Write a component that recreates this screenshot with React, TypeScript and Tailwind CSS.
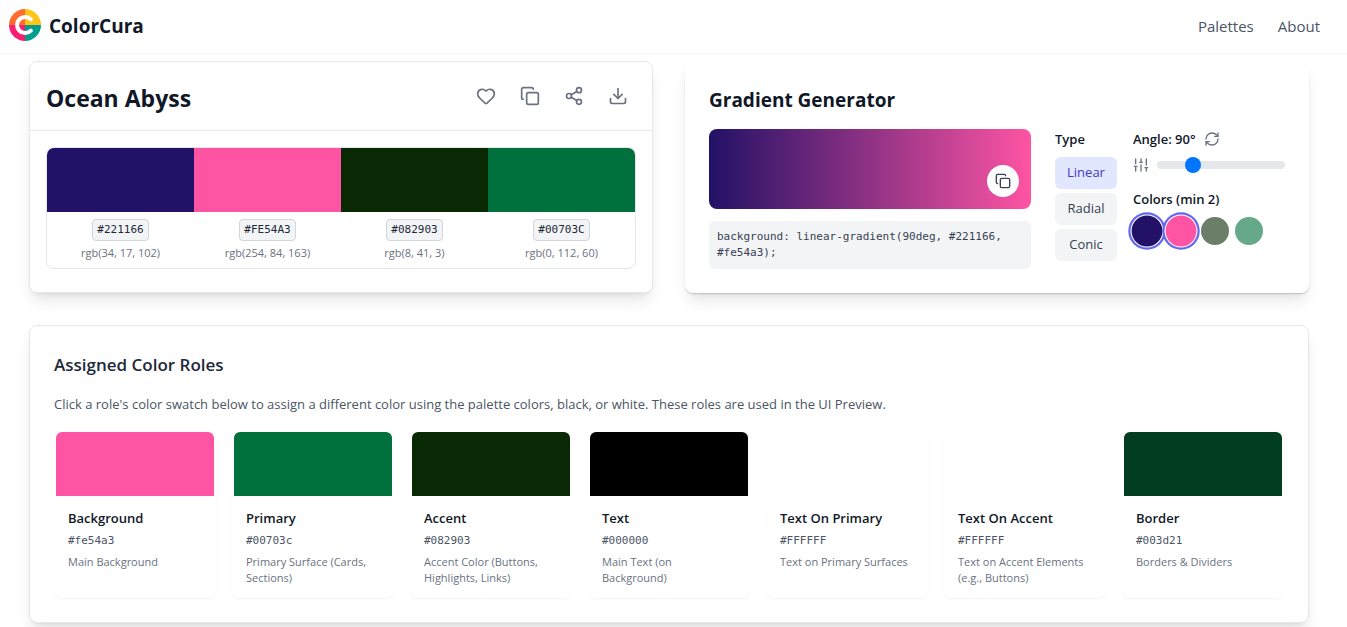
import { useState } from 'react';
import { Copy, Download, Heart, RefreshCw, Share2 } from 'lucide-react';

type GradientType = 'Linear' | 'Radial' | 'Conic';

const PALETTE = [
  { hex: '#221166', rgb: 'rgb(34, 17, 102)' },
  { hex: '#FE54A3', rgb: 'rgb(254, 84, 163)' },
  { hex: '#082903', rgb: 'rgb(8, 41, 3)' },
  { hex: '#00703C', rgb: 'rgb(0, 112, 60)' },
];

const ROLES = [
  { name: 'Background', hex: '#fe54a3', description: 'Main Background' },
  { name: 'Primary', hex: '#00703c', description: 'Primary Surface (Cards,\nSections)' },
  { name: 'Accent', hex: '#082903', description: 'Accent Color (Buttons,\nHighlights, Links)' },
  { name: 'Text', hex: '#000000', description: 'Main Text (on\nBackground)' },
  { name: 'Text On Primary', hex: '#FFFFFF', description: 'Text on Primary Surfaces' },
  { name: 'Text On Accent', hex: '#FFFFFF', description: 'Text on Accent Elements\n(e.g., Buttons)' },
  { name: 'Border', hex: '#003d21', description: 'Borders & Dividers' },
];

const ACTIONS = [
  { label: 'Like', Icon: Heart },
  { label: 'Copy', Icon: Copy },
  { label: 'Share', Icon: Share2 },
  { label: 'Download', Icon: Download },
];

export default function App() {
  return (
    <div className="min-h-screen bg-white font-['Open_Sans',sans-serif] text-gray-900">
      <Header />
      <main className="pr-[9px] pt-2 pb-8">
        <div className="mx-auto max-w-7xl space-y-8">
          <div className="grid grid-cols-2 gap-8">
            <PaletteCard />
            <GradientGenerator />
          </div>
          <ColorRoles />
        </div>
      </main>
    </div>
  );
}

function Header() {
  return (
    <header className="flex items-start justify-between pt-[9px] pr-[27px] pb-[10px] pl-[9px] shadow-xs">
      <a href="#" className="flex items-start gap-2">
        <Logo />
        <span className="text-[19px] leading-[34px] font-bold">ColorCura</span>
      </a>
      <nav className="flex gap-6 text-[15px] leading-[34px] text-gray-600">
        <a href="#palettes">Palettes</a>
        <a href="#about">About</a>
      </nav>
    </header>
  );
}

function Logo() {
  return (
    <svg viewBox="0 0 32 32" className="size-8" aria-hidden="true">
      <path d="M16 16V0A16 16 0 0 0 0 16z" fill="#ff6b2c" />
      <path d="M16 16h16A16 16 0 0 0 16 0z" fill="#ffc516" />
      <path d="M16 16H0a16 16 0 0 0 16 16z" fill="#f81f73" />
      <path d="M16 16v16a16 16 0 0 0 16-16z" fill="#009c8f" />
      <path d="M21.9 10.3a8.1 8.1 0 1 0 0 11.4" fill="none" stroke="#fff" strokeWidth="4" strokeLinecap="round" />
    </svg>
  );
}

function PaletteCard() {
  return (
    <section className="rounded-lg border border-gray-200 bg-white shadow-lg">
      <div className="flex items-start justify-between border-b border-gray-200 px-4 pt-4 pb-3">
        <h1 className="text-[23px] leading-10 font-bold">Ocean Abyss</h1>
        <div className="flex gap-2 text-gray-500">
          {ACTIONS.map(({ label, Icon }) => (
            <button key={label} type="button" aria-label={label} className="p-2">
              <Icon size={20} />
            </button>
          ))}
        </div>
      </div>

      <div className="p-4">
        <div className="grid grid-cols-4 overflow-hidden rounded-lg border border-gray-200">
          {PALETTE.map(color => (
            <div key={color.hex} className="flex flex-col items-center">
              <div className="h-16 w-full" style={{ backgroundColor: color.hex }} />
              <div className="flex flex-col items-center gap-1 py-[7px]">
                <button
                  type="button"
                  className="rounded border border-gray-300 bg-gray-100 px-1 py-0.5 font-['DejaVu_Sans_Mono',monospace] text-[11px] leading-4 text-gray-800"
                >
                  {color.hex}
                </button>
                <span className="text-[11px] leading-4 text-gray-500">{color.rgb}</span>
              </div>
            </div>
          ))}
        </div>
      </div>
    </section>
  );
}

function GradientGenerator() {
  const [type, setType] = useState<GradientType>('Linear');
  const [angle, setAngle] = useState(90);
  const [selected, setSelected] = useState(['#221166', '#FE54A3']);

  const stops = selected.map(c => c.toLowerCase()).join(', ');
  const gradient =
    type === 'Linear'
      ? `linear-gradient(${angle}deg, ${stops})`
      : type === 'Radial'
        ? `radial-gradient(circle, ${stops})`
        : `conic-gradient(from ${angle}deg, ${stops})`;

  const toggleColor = (hex: string) => {
    if (!selected.includes(hex)) setSelected([...selected, hex]);
    else if (selected.length > 2) setSelected(selected.filter(c => c !== hex));
  };

  return (
    <section className="rounded-lg bg-white p-6 shadow-[0_1px_1px_rgb(0_0_0/0.15),0_10px_15px_-3px_rgb(0_0_0/0.1),0_4px_6px_-4px_rgb(0_0_0/0.1)]">
      <h2 className="mb-[14px] text-[19px] leading-[30px] font-bold">Gradient Generator</h2>
      <div className="flex gap-6">
        <div className="min-w-0 flex-1 space-y-3">
          <div className="flex h-20 items-end justify-end rounded-lg p-3" style={{ background: gradient }}>
            <button type="button" aria-label="Copy CSS" className="rounded-full bg-white p-2 text-gray-700">
              <Copy size={16} />
            </button>
          </div>
          <code className="block rounded-md bg-gray-100 p-2 font-['DejaVu_Sans_Mono',monospace] text-[11px] leading-4 text-gray-700">
            {`background: ${gradient};`}
          </code>
        </div>

        <div className="flex gap-4">
          <div>
            <h3 className="mb-2 text-[13px] leading-5 font-semibold">Type</h3>
            <div className="flex w-[62px] flex-col gap-1">
              {(['Linear', 'Radial', 'Conic'] as GradientType[]).map(t => (
                <button
                  key={t}
                  type="button"
                  onClick={() => setType(t)}
                  className={`h-8 rounded-md text-[13px] ${
                    type === t ? 'bg-[#e0e7ff] text-[#4338ca]' : 'bg-gray-100 text-gray-700'
                  }`}
                >
                  {t}
                </button>
              ))}
            </div>
          </div>

          <div className="w-[152px]">
            <div className="flex items-center gap-2">
              <label htmlFor="angle" className="text-[13px] leading-5 font-semibold">
                {`Angle: ${angle}°`}
              </label>
              <button type="button" aria-label="Reset angle" className="text-gray-500" onClick={() => setAngle(90)}>
                <RefreshCw size={16} />
              </button>
            </div>
            <div className="mt-2 flex items-center gap-2">
              <SlidersIcon />
              <input
                id="angle"
                type="range"
                min={0}
                max={360}
                value={angle}
                onChange={e => setAngle(Number(e.target.value))}
                className="h-2 w-32 appearance-none rounded-lg bg-gray-200 [&::-webkit-slider-thumb]:size-4 [&::-webkit-slider-thumb]:appearance-none [&::-webkit-slider-thumb]:rounded-full [&::-webkit-slider-thumb]:bg-[#0075ff]"
              />
            </div>
            <h3 className="mt-4 mb-2 text-[13px] leading-5 font-semibold">Colors (min 2)</h3>
            <div className="flex gap-1.5">
              {PALETTE.map(({ hex }) => (
                <button
                  key={hex}
                  type="button"
                  aria-label={`Use ${hex}`}
                  aria-pressed={selected.includes(hex)}
                  onClick={() => toggleColor(hex)}
                  className={`size-7 rounded-full ${
                    selected.includes(hex) ? 'scale-110 ring-2 ring-[#6366f1] ring-offset-1' : 'opacity-60'
                  }`}
                  style={{ backgroundColor: hex }}
                />
              ))}
            </div>
          </div>
        </div>
      </div>
    </section>
  );
}

function SlidersIcon() {
  return (
    <svg
      viewBox="0 0 24 24"
      className="size-4 shrink-0 text-gray-500"
      fill="none"
      stroke="currentColor"
      strokeWidth="2"
      strokeLinecap="round"
      strokeLinejoin="round"
      aria-hidden="true"
    >
      <path d="M4 21v-7M4 10V3M12 21v-9M12 8V3M20 21v-5M20 12V3M2 14h4M10 8h4M18 16h4" />
    </svg>
  );
}

function ColorRoles() {
  return (
    <section className="rounded-lg border border-gray-200 bg-white p-6 shadow-lg">
      <h2 className="mb-[14px] text-[17px] leading-[30px] font-semibold text-gray-800">Assigned Color Roles</h2>
      <p className="mb-4 text-[13px] leading-5 text-gray-600">
        Click a role's color swatch below to assign a different color using the palette colors, black, or white. These
        roles are used in the UI Preview.
      </p>
      <div className="grid grid-cols-7 gap-4">
        {ROLES.map(role => (
          <div key={role.name} className="rounded-lg border-2 border-transparent shadow-xs">
            <button
              type="button"
              aria-label={`Change ${role.name} color`}
              className="block h-16 w-full rounded-t-md"
              style={{ backgroundColor: role.hex }}
            />
            <div className="px-3 pt-3 pb-2.5">
              <h3 className="text-[13px] leading-5 font-semibold">{role.name}</h3>
              <p className="mt-[5px] font-['DejaVu_Sans_Mono',monospace] text-[11px] leading-4 text-gray-600">
                {role.hex}
              </p>
              <p className="mt-[5px] text-[11px] leading-4 whitespace-pre-line text-gray-500">{role.description}</p>
            </div>
          </div>
        ))}
      </div>
    </section>
  );
}
